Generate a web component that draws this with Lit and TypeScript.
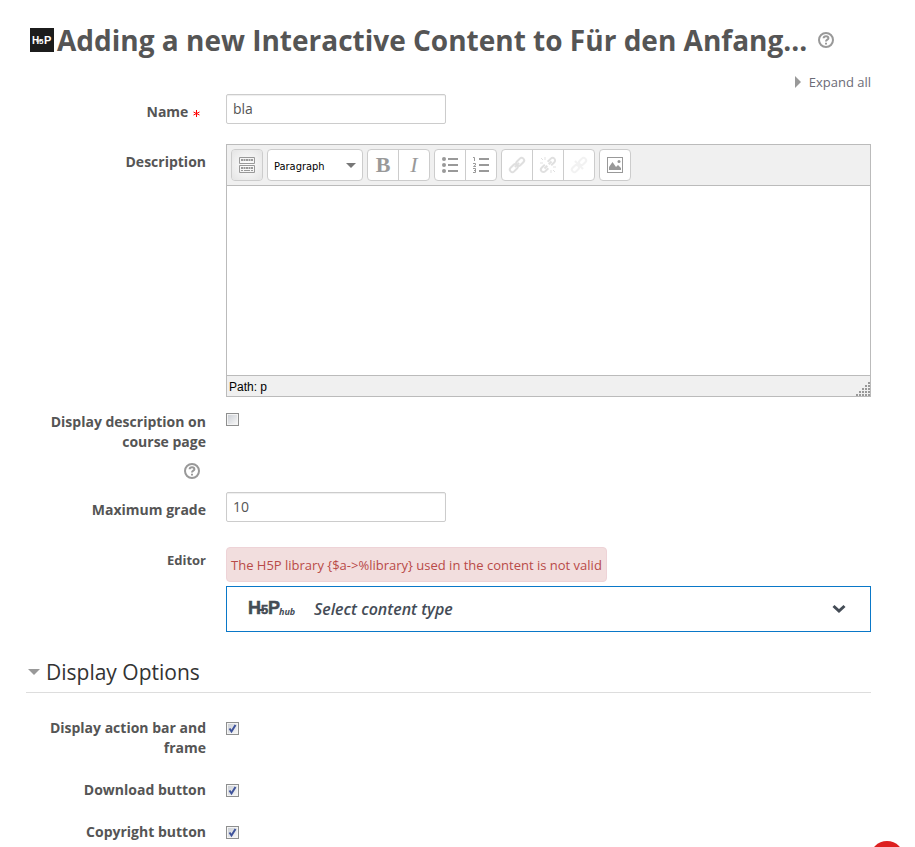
import { LitElement, html, css, svg } from "lit";
import { customElement, property, state } from "lit/decorators.js";

@customElement("help-button")
class HelpButton extends LitElement {
  @property() label = "Help";

  static styles = css`
    :host { display: inline-flex; }
    .help { display: block; padding: 0; border: 0; background: none; color: #999; cursor: pointer; }
    .help svg { display: block; }
  `;

  render() {
    return html`<button class="help" type="button" aria-label=${this.label}>
      <svg width="16" height="16" viewBox="0 0 16 16" fill="none" stroke="currentColor">
        <circle cx="8" cy="8" r="7" stroke-width="2" />
        <path d="M5.600 6.200C5.700 3.600 10.400 3.600 10.400 6.200C10.400 7.800 8 7.600 8 9.600" stroke-width="2" />
        <path d="M8 10.800V12.600" stroke-width="2" />
      </svg>
    </button>`;
  }
}

const icons = {
  toggle: svg`
    <path d="M.5 .5H15.500V6.500H.5ZM.5 8.500H15.500V15.500H.5Z" fill="none" stroke="#999" />
    <path d="M2 3H14M2 11H14" stroke="#999" stroke-width="2" stroke-dasharray="2 .5" />
    <path d="M2 13.500H4M5 13.500H11M12 13.500H14" stroke="#999" />`,
  bullets: svg`
    <g fill="#999"><circle cx="2" cy="2" r="2" /><circle cx="2" cy="8" r="2" /><circle cx="2" cy="14" r="2" /></g>
    <path d="M6 2H16M6 8H16M6 14H16" stroke="#999" stroke-width="2" />`,
  numbers: svg`
    <path d="M6 2H16M6 8H16M6 14H16" stroke="#999" stroke-width="2" />
    <path d="M0 .5H1.500V4M0 6.500H2.500V8L.5 9.500H3M0 11.500H2.500V15.500H0M1 13.500H2.500" fill="none" stroke="#999" />`,
  link: svg`
    <g fill="none" stroke="#999" stroke-width="2" transform="rotate(-45 8 8)">
      <rect x="-1" y="5.500" width="9" height="5" rx="2.500" /><rect x="8" y="5.500" width="9" height="5" rx="2.500" />
      <path d="M5 8H11" />
    </g>`,
  unlink: svg`
    <g fill="none" stroke="#999" stroke-width="2" transform="rotate(-45 8 8)">
      <path d="M6 10.500H1.500A2.500 2.500 0 0 1 1.500 5.500H6M10 5.500H14.500A2.500 2.500 0 0 1 14.500 10.500H10M3 8H7M9 8H13" />
    </g>
    <path d="M5 0V3M1 1L3 3M0 6H3M11 16V13M15 15L13 13M16 10H13" stroke="#999" />`,
  nolink: svg`
    <g fill="none" stroke="#999" stroke-width="2" transform="rotate(-45 8 8)">
      <rect x="-1" y="5.500" width="8" height="5" rx="2.500" /><rect x="9" y="5.500" width="8" height="5" rx="2.500" />
    </g>
    <path d="M4 4L12 12" stroke="#999" stroke-width="2" />`,
  image: svg`
    <rect x=".5" y=".5" width="15" height="15" fill="none" stroke="#999" />
    <path d="M2 13V10L5.500 5L9 10L11 8L14 11V13Z" fill="#999" />
    <circle cx="12" cy="4.500" r="1.500" fill="#999" />`,
};

const icon = (shape: unknown) =>
  html`<svg width="16" height="16" viewBox="0 0 16 16" overflow="visible" aria-hidden="true">${shape}</svg>`;

@customElement("rich-editor")
class RichEditor extends LitElement {
  static styles = css`
    :host { display: block; }
    .editor { border: 1px solid #bbb; background: #fff; }
    .toolbar { display: flex; flex-wrap: wrap; gap: 4px; padding: 4px; background: #f0f0f0; border-bottom: 1px solid #bbb; }
    .group { display: flex; border: 1px solid #ccc; border-radius: 4px; background: #fff; overflow: hidden; }
    .tool { display: flex; align-items: center; justify-content: center; width: 30px; height: 30px; padding: 0; border: 0; background: none; color: #999; font: 22px "Liberation Serif", serif; }
    .tool + .tool { width: 31px; border-left: 1px solid #ccc; }
    .tool.pressed { background: radial-gradient(#fff, #e4e4e4); }
    .tool.bold { font-weight: bold; }
    .tool.italic { font-style: italic; }
    .tool:disabled svg { opacity: 0.3; }
    .tool.faint:disabled svg { opacity: 0.12; }
    .format { position: relative; }
    .format select { appearance: none; width: 94px; height: 30px; padding: 2px 20px 0 6px; border: 0; background: none; color: #000; font: 11px "DejaVu Sans Condensed", "DejaVu Sans", sans-serif; }
    .format svg { position: absolute; right: 6px; top: 13px; pointer-events: none; }
    .area { display: block; box-sizing: border-box; width: 100%; height: 189px; padding: 8px; border: 0; outline: 0; resize: none; font: 14px "Open Sans", sans-serif; }
    .status { display: flex; justify-content: space-between; align-items: flex-end; height: 20px; padding-left: 2px; border-top: 1px solid #bbb; background: #f0f0f0; color: #000; font: 12px/18px "Liberation Sans", sans-serif; }
    .status svg { display: block; }
  `;

  render() {
    const dots = [];
    for (let r = 0; r < 5; r++)
      for (let c = 4 - r; c < 5; c++) dots.push(svg`<rect x=${c * 3} y=${r * 3} width="2" height="2" />`);
    return html`<div class="editor">
      <div class="toolbar" role="toolbar" aria-label="Text formatting">
        <div class="group"><button class="tool pressed" type="button" aria-label="Toolbar toggle">${icon(icons.toggle)}</button></div>
        <div class="group format">
          <select aria-label="Format"><option>Paragraph</option><option>Heading</option></select>
          <svg width="10" height="5" viewBox="0 0 10 5" aria-hidden="true"><path d="M0 0H10L5 5Z" fill="#777" /></svg>
        </div>
        <div class="group">
          <button class="tool bold" type="button" aria-label="Bold">B</button>
          <button class="tool italic" type="button" aria-label="Italic">I</button>
        </div>
        <div class="group">
          <button class="tool" type="button" aria-label="Unordered list">${icon(icons.bullets)}</button>
          <button class="tool" type="button" aria-label="Ordered list">${icon(icons.numbers)}</button>
        </div>
        <div class="group">
          <button class="tool" type="button" disabled aria-label="Insert link">${icon(icons.link)}</button>
          <button class="tool" type="button" disabled aria-label="Unlink">${icon(icons.unlink)}</button>
          <button class="tool faint" type="button" disabled aria-label="Prevent automatic linking">${icon(icons.nolink)}</button>
        </div>
        <div class="group"><button class="tool" type="button" aria-label="Insert image">${icon(icons.image)}</button></div>
      </div>
      <textarea class="area" aria-label="Description"></textarea>
      <div class="status">
        <span>Path: p</span>
        <svg width="14" height="14" viewBox="0 0 14 14" fill="#999" aria-hidden="true">${dots}</svg>
      </div>
    </div>`;
  }
}

@customElement("app-root")
class AppRoot extends LitElement {
  @state() private options = [
    { id: "frame", label: "Display action bar and frame", on: true },
    { id: "download", label: "Download button", on: true },
    { id: "copyright", label: "Copyright button", on: true },
  ];

  static styles = css`
    :host { display: block; color: #555; font: 14px/20px "Open Sans", sans-serif; }
    .page { padding: 20px 44px 4px 26px; }
    .title { display: flex; align-items: center; gap: 3px; padding-left: 4px; }
    .title h1 { margin: 0; font-size: 28px; line-height: 40px; font-weight: 700; }
    .title svg { flex: none; }
    .title help-button { margin-left: 8px; }
    .expand { display: flex; justify-content: flex-end; margin: 12px 0 2px; }
    .expand a { display: flex; align-items: center; gap: 8px; color: #6b6b76; font-size: 13px; text-decoration: none; }
    .form { display: flex; flex-direction: column; }
    .row { display: grid; grid-template-columns: 180px minmax(0, 1fr); column-gap: 20px; align-items: start; margin-bottom: 20px; }
    .label { display: block; padding-top: 8px; text-align: right; font-weight: 700; }
    .label.small { font-size: 13px; }
    .required { display: inline-block; margin: 0 6px 0 1px; color: #f00; vertical-align: middle; }
    .required svg { display: block; }
    .field { box-sizing: border-box; width: 220px; height: 30px; padding: 0 6px 2px; border: 1px solid #ccc; border-radius: 2px; box-shadow: inset 0 1px 1px #eee; background: #fff; color: #555; font: 14px "Open Sans", sans-serif; }
    .editor-row { margin-bottom: 15px; }
    .check-row { margin-bottom: 10px; }
    .check-row .label, .option .label { padding-top: 0; }
    .help-line { display: flex; justify-content: flex-end; padding: 11px 6px 3px 0; }
    .check { appearance: none; display: block; box-sizing: border-box; width: 13px; height: 13px; margin: 1px 0 0; border: 1px solid #8e8f8f; background: linear-gradient(135deg, #ccd0d6, #f6f6f6) content-box, #f4f4f4; padding: 1px; }
    .tick { display: grid; justify-items: start; }
    .tick > * { grid-area: 1 / 1; }
    .tick svg { display: none; pointer-events: none; }
    .tick .check:checked + svg { display: block; z-index: 1; }
    .option { margin-bottom: 22px; }
    .option .tick { padding-top: 4px; }
    .option .check { margin: 0; }
    .hub-area { padding-top: 5px; display: flex; flex-direction: column; align-items: flex-start; gap: 4px; }
    .error { padding: 7px 4px 6px; border: 1px solid #eed3d7; border-radius: 4px; background: #f2dede; color: #b94a48; font-size: 13px; }
    .hub { display: flex; align-items: center; width: 100%; height: 46px; padding: 0 24px 0 21px; border: 1px solid #0a78c8; background: #fff; color: #444c56; font: italic 600 16px "Open Sans", sans-serif; }
    .hub-name { margin-left: 18px; padding-bottom: 1px; flex: 1; text-align: left; }
    .section { margin: 0 0 25px; border-bottom: 1px solid #ddd; font-size: 21px; line-height: 40px; font-weight: 400; }
    .section button { display: flex; align-items: center; gap: 6px; padding: 0 0 0 2px; border: 0; background: none; color: #333; font: inherit; }
    .option:last-child { margin-bottom: 0; }
    .float { position: fixed; right: 11px; bottom: -28px; width: 34px; height: 34px; padding: 0; border: 0; border-radius: 50%; background: #dd2020; }
    .mark { font-family: "Liberation Sans", sans-serif; font-style: normal; font-weight: 700; }
    .mark-hub { font: italic 700 9px "Open Sans", sans-serif; }
  `;

  private toggle(id: string) {
    this.options = this.options.map((o) => (o.id === id ? { ...o, on: !o.on } : o));
  }

  render() {
    return html`
      <main class="page">
        <header class="title">
          <svg width="24" height="24" viewBox="0 0 24 24" aria-hidden="true">
            <rect width="24" height="24" fill="#1c1c1c" />
            <g class="mark" fill="#fff"><text x="2" y="16" font-size="10">H</text><text x="9" y="16" font-size="8">5</text><text x="14" y="16" font-size="11">P</text></g>
            <path d="M6 13H11" stroke="#fff" />
          </svg>
          <h1>Adding a new Interactive Content to Für den Anfang...</h1>
          <help-button label="Help with Interactive Content"></help-button>
        </header>
        <div class="expand">
          <a href="#all"><svg width="6" height="12" viewBox="0 0 6 12" aria-hidden="true"><path d="M0 0L6 6L0 12Z" fill="#999" /></svg>Expand all</a>
        </div>

        <div class="form">
          <div class="row">
            <label class="label" for="name">Name
              <span class="required"><svg width="7" height="7" viewBox="0 0 7 7" role="img" aria-label="required"><path d="M3.500 0V7M.5 2L6.500 5M.5 5L6.500 2" stroke="#f00" /></svg></span></label>
            <input class="field" id="name" .value=${"bla"} />
          </div>
          <div class="row editor-row">
            <span class="label">Description</span>
            <rich-editor></rich-editor>
          </div>
          <div class="row check-row">
            <div>
              <label class="label" for="show">Display description on course page</label>
              <div class="help-line"><help-button label="Help with display description"></help-button></div>
            </div>
            <input class="check" id="show" type="checkbox" />
          </div>
          <div class="row">
            <label class="label" for="grade">Maximum grade</label>
            <input class="field" id="grade" .value=${"10"} />
          </div>
          <div class="row">
            <span class="label small">Editor</span>
            <div class="hub-area">
              <div class="error" role="alert">The H5P library {$a->%library} used in the content is not valid</div>
              <button class="hub" type="button">
                <svg width="48" height="28" viewBox="0 0 48 28" fill="currentColor" aria-hidden="true">
                  <g class="mark" stroke="currentColor" stroke-width=".5"><text x="0" y="19" font-size="18">H</text><text x="13" y="19" font-size="13">5</text><text x="20" y="19" font-size="18">P</text></g>
                  <path d="M10 15H16" stroke="currentColor" stroke-width="2" />
                  <text class="mark-hub" x="31" y="20">hub</text>
                </svg>
                <span class="hub-name">Select content type</span>
                <svg width="14" height="10" viewBox="0 0 14 10" fill="none" stroke="currentColor" stroke-width="3" aria-hidden="true"><path d="M1.500 2L7 7L12.500 2" /></svg>
              </button>
            </div>
          </div>
        </div>

        <h2 class="section">
          <button type="button" aria-expanded="true">
            <svg width="12" height="6" viewBox="0 0 12 6" aria-hidden="true"><path d="M0 0H12L6 6Z" fill="#999" /></svg>Display Options
          </button>
        </h2>
        <div class="form">
          ${this.options.map(
            (o) => html`<div class="row option">
              <label class="label" for=${o.id}>${o.label}</label>
              <div class="tick">
                <input class="check" id=${o.id} type="checkbox" .checked=${o.on} @change=${() => this.toggle(o.id)} />
                <svg width="13" height="13" viewBox="0 0 13 13" aria-hidden="true"><path d="M3.500 6.500L5.500 9.500L9.500 3" fill="none" stroke="#3f539b" stroke-width="2" /></svg>
              </div>
            </div>`
          )}
        </div>
      </main>
      <button class="float" type="button" aria-label="Open chat"></button>
    `;
  }
}
